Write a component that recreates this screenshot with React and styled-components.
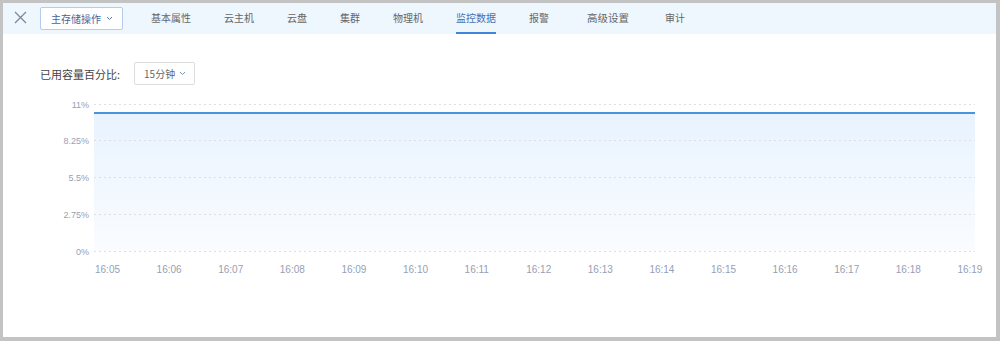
import styled, { createGlobalStyle } from "styled-components";

const GlobalStyle = createGlobalStyle`
  body {
    margin: 0;
    font-family: "Noto Sans CJK SC", "Noto Sans", sans-serif;
  }
`;

const TABS = ["基本属性", "云主机", "云盘", "集群", "物理机", "监控数据", "报警", "高级设置", "审计"];
const ACTIVE = "监控数据";

const Y_TICKS = ["11%", "8.25%", "5.5%", "2.75%", "0%"];
const X_TICKS = Array.from({ length: 15 }, (_, i) => `16:${String(5 + i).padStart(2, "0")}`);

// plot geometry (svg coords)
const PLOT_LEFT = 54;
const PLOT_RIGHT = 935;
const PLOT_TOP = 9.5;
const ROW_H = 36.9;
const VALUE_Y = 19;

export default function App() {
  return (
    <>
      <GlobalStyle />
      <Frame>
        <Header>
          <CloseButton aria-label="close">
            <svg width="13" height="13" viewBox="0 0 13 13">
              <path d="M1 1L12 12M12 1L1 12" stroke="#7d8899" strokeWidth="1.3" fill="none" />
            </svg>
          </CloseButton>
          <ActionButton>
            主存储操作
            <Chevron color="#5d79ad" />
          </ActionButton>
          <Tabs>
            {TABS.map((t) => (
              <Tab key={t} $active={t === ACTIVE} $large={t === "高级设置"}>
                {t}
              </Tab>
            ))}
          </Tabs>
        </Header>

        <Content>
          <TitleRow>
            <Label>已用容量百分比:</Label>
            <Select>
              15分钟
              <Chevron color="#7d8fb3" />
            </Select>
          </TitleRow>
          <ChartSvg width="950" height="192" viewBox="0 0 950 192">
            <defs>
              <linearGradient id="area" x1="0" y1="0" x2="0" y2="1">
                <stop offset="0%" stopColor="#e8f3fe" />
                <stop offset="100%" stopColor="#fafcff" />
              </linearGradient>
            </defs>
            <rect
              x={PLOT_LEFT}
              y={VALUE_Y}
              width={PLOT_RIGHT - PLOT_LEFT}
              height={PLOT_TOP + ROW_H * 4 - VALUE_Y}
              fill="url(#area)"
            />
            {Y_TICKS.map((t, i) => {
              const y = Math.round(PLOT_TOP + ROW_H * i) + 0.5;
              return (
                <g key={t}>
                  <line
                    x1={PLOT_LEFT}
                    x2={PLOT_RIGHT}
                    y1={y}
                    y2={y}
                    stroke="#dedede"
                    strokeDasharray="2 3"
                  />
                  <AxisText x={49} y={y + 3.2} textAnchor="end" fontSize="9">
                    {t}
                  </AxisText>
                </g>
              );
            })}
            <line
              x1={PLOT_LEFT}
              x2={PLOT_RIGHT}
              y1={VALUE_Y}
              y2={VALUE_Y}
              stroke="#4a93e3"
              strokeWidth="1.8"
            />
            {X_TICKS.map((t, i) => (
              <AxisText key={t} x={55 + i * 61.6} y={179} fontSize="10">
                {t}
              </AxisText>
            ))}
          </ChartSvg>
        </Content>
      </Frame>
    </>
  );
}

function Chevron({ color }) {
  return (
    <svg width="7" height="5" viewBox="0 0 7 5">
      <path d="M1 1L3.5 3.5L6 1" stroke={color} strokeWidth="1" fill="none" />
    </svg>
  );
}

const Frame = styled.div`
  width: 1000px;
  height: 341px;
  box-sizing: border-box;
  border: 3px solid #c3c3c3;
  border-right-width: 4px;
  border-bottom-width: 4px;
  background: #ffffff;
  display: flex;
  flex-direction: column;
`;

const Header = styled.div`
  height: 31px;
  flex-shrink: 0;
  display: flex;
  align-items: stretch;
  background: #eef6fe;
  padding-left: 11px;
`;

const CloseButton = styled.div`
  display: flex;
  align-items: center;
  width: 14px;
  padding-bottom: 2px;
`;

const ActionButton = styled.div`
  align-self: center;
  margin-left: 12px;
  margin-top: -1px;
  height: 23px;
  box-sizing: border-box;
  padding: 0 9px 0 10px;
  display: flex;
  align-items: center;
  gap: 5px;
  background: #ffffff;
  border: 1px solid #b5ccec;
  border-radius: 2px;
  color: #4564a0;
  font-size: 10px;
  white-space: nowrap;
`;

const Tabs = styled.div`
  display: flex;
  margin-left: 28px;
  gap: 33px;
`;

const Tab = styled.div`
  display: flex;
  align-items: center;
  box-sizing: border-box;
  border-bottom: 2px solid ${({ $active }) => ($active ? "#3f86d8" : "transparent")};
  color: ${({ $active }) => ($active ? "#4570b3" : "#666666")};
  font-size: ${({ $large }) => ($large ? "10.5px" : "10px")};
  margin: ${({ $large }) => ($large ? "0 3px 0 5px" : "0")};
  white-space: nowrap;
`;

const Content = styled.div`
  padding: 28px 0 0 37px;
`;

const TitleRow = styled.div`
  display: flex;
  align-items: center;
  gap: 14px;
`;

const Label = styled.span`
  font-size: 11px;
  color: #444444;
  white-space: nowrap;
`;

const Select = styled.div`
  height: 23px;
  box-sizing: border-box;
  display: flex;
  align-items: center;
  gap: 4px;
  padding: 0 8px 0 9px;
  border: 1px solid #dddddd;
  border-radius: 2px;
  color: #666666;
  font-size: 10px;
  white-space: nowrap;
`;

const ChartSvg = styled.svg`
  display: block;
  margin-top: 9px;
`;

const AxisText = styled.text`
  font-family: "Liberation Sans", Arial, sans-serif;
  fill: #96a0b5;
`;
